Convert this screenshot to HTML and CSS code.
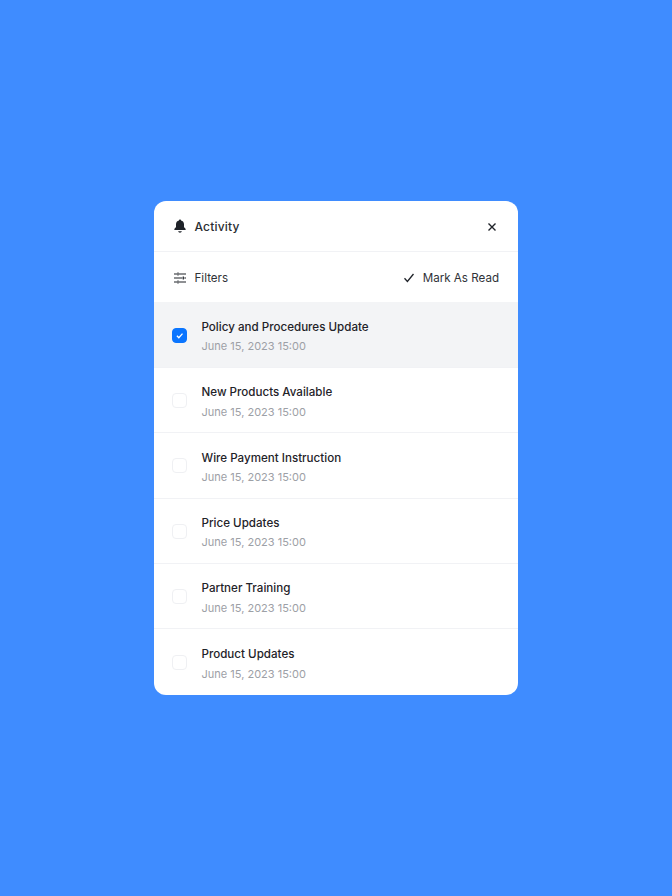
FILE: index.html
```html
<!DOCTYPE html>
<html lang="en">
<head>
<meta charset="utf-8">
<title>Activity</title>
<link rel="stylesheet" href="styles.css">
</head>
<body>
<section class="card">
  <header class="bar bar-head">
    <div class="group">
      <svg class="icon" viewBox="0 0 14 14" aria-hidden="true"><path fill="#1f2329" d="M7 .4c.6 0 1 .4 1 1 1.900.4 3 1.900 3 3.900v2.200c0 .8.500 1.300 1.300 1.900.7.500.5 1.600-.4 1.600H2.100c-.9 0-1.100-1.100-.4-1.600C2.500 8.800 3 8.300 3 7.500V5.300c0-2 1.100-3.500 3-3.900 0-.6.400-1 1-1zM5.100 12.300h3.800c-.2.900-1 1.400-1.900 1.400s-1.700-.5-1.900-1.400z"/></svg>
      <span class="head-title">Activity</span>
    </div>
    <svg class="close" viewBox="0 0 10 10" aria-hidden="true"><path d="M1.500 1.500l7 7M8.500 1.500l-7 7"/></svg>
  </header>
  <div class="bar bar-tools">
    <div class="group">
      <svg class="icon line" viewBox="0 0 14 14" aria-hidden="true"><path d="M1 3h3M6 3h7M5 1.500v3M1 7h8.300M11.300 7H13M10.300 5.500v3M1 11h3M6 11h7M5 9.500v3"/></svg>
      <span class="tool-label">Filters</span>
    </div>
    <div class="group group-read">
      <svg class="tick" viewBox="0 0 12 10" aria-hidden="true"><path d="M1.500 5.300l2.900 3.200L10.500 1"/></svg>
      <span class="tool-label">Mark As Read</span>
    </div>
  </div>
  <ul class="list">
    <li class="row row-active">
      <span class="box box-on"><svg viewBox="0 0 10 10" aria-hidden="true"><path d="M3 5.200l1.500 1.500L7.300 3.600"/></svg></span>
      <div class="text"><p class="title">Policy and Procedures Update</p><p class="date">June 15, 2023 15:00</p></div>
    </li>
    <li class="row"><span class="box"></span><div class="text"><p class="title">New Products Available</p><p class="date">June 15, 2023 15:00</p></div></li>
    <li class="row"><span class="box"></span><div class="text"><p class="title">Wire Payment Instruction</p><p class="date">June 15, 2023 15:00</p></div></li>
    <li class="row"><span class="box"></span><div class="text"><p class="title">Price Updates</p><p class="date">June 15, 2023 15:00</p></div></li>
    <li class="row"><span class="box"></span><div class="text"><p class="title">Partner Training</p><p class="date">June 15, 2023 15:00</p></div></li>
    <li class="row"><span class="box"></span><div class="text"><p class="title">Product Updates</p><p class="date">June 15, 2023 15:00</p></div></li>
  </ul>
</section>
</body>
</html>
```
FILE: styles.css
```css
* { box-sizing: border-box; }
html, body { height: 100%; }
body {
  margin: 0;
  background: #3f8cff;
  display: flex;
  align-items: center;
  justify-content: center;
  font-family: Inter, "Liberation Sans", sans-serif;
}
.card {
  width: 364px;
  background: #fff;
  border-radius: 12px;
  overflow: hidden;
}
.bar {
  display: flex;
  align-items: center;
  justify-content: space-between;
  height: 50.5px;
  padding: 0 19px;
}
.bar-head { border-bottom: 1px solid #f1f2f5; }
.bar-tools { padding-top: 1px; }
.group { display: flex; align-items: center; gap: 7.500px; }
.group-read { gap: 8px; }
.icon { width: 14px; height: 14px; display: block; }
.line path { fill: none; stroke: #1f2329; stroke-width: 1.200; }
.close { width: 10px; height: 10px; display: block; margin: 1px 2px 0 0; }
.close path { fill: none; stroke: #1f2329; stroke-width: 1.400; }
.tick { width: 12px; height: 10px; display: block; }
.tick path { fill: none; stroke: #1f2329; stroke-width: 1.300; }
.head-title { font-size: 12px; font-weight: 500; color: #2a2d32; letter-spacing: .2px; }
.tool-label { font-size: 11.600px; color: #2f3238; }
.list { list-style: none; margin: 0; padding: 0; }
.row {
  display: flex;
  align-items: center;
  gap: 14.500px;
  height: 65.400px;
  padding-left: 18px;
  border-bottom: 1px solid #f1f2f5;
}
.row:last-child { border-bottom: 0; }
.row-active { background: #f3f4f6; }
.box {
  width: 15px;
  height: 15px;
  border-radius: 4px;
  border: 1px solid #eff0f3;
  background: #fff;
  flex: none;
  display: block;
  margin-top: 1px;
}
.box-on { background: #0a75ff; border-color: #0a75ff; }
.box-on svg { display: block; width: 13px; height: 13px; }
.box-on path { fill: none; stroke: #fff; stroke-width: 1; }
.text { display: flex; flex-direction: column; gap: 3.500px; padding-top: 4px; }
.title { margin: 0; font-size: 11.600px; line-height: 16px; font-weight: 450; color: #1f2329; }
.date { margin: 0; font-size: 11px; line-height: 16px; color: #9da0a6; }
```
